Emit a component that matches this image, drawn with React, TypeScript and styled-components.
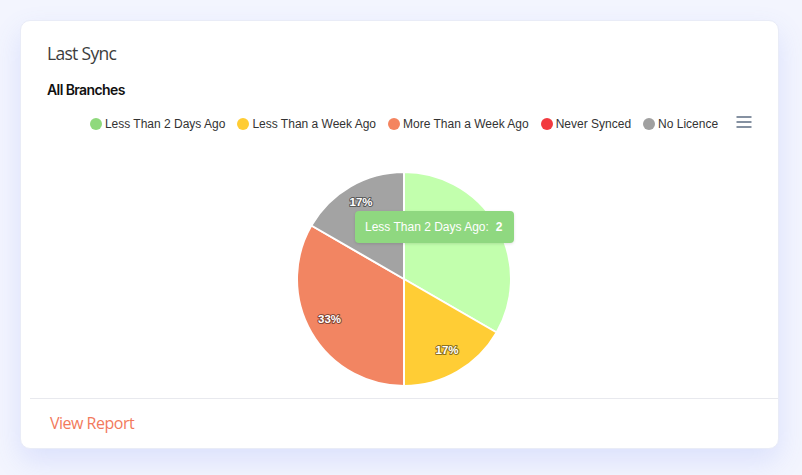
import React from "react";
import styled, { createGlobalStyle } from "styled-components";

const Global = createGlobalStyle`
  html, body { margin: 0; padding: 0; }
  body {
    background: #f3f5fe;
    width: 802px;
    height: 475px;
    overflow: hidden;
    font-family: "Liberation Sans", Arial, sans-serif;
  }
`;

const Page = styled.div`
  padding: 20px 23px 26px 20px;
`;

const Card = styled.div`
  width: 759px;
  height: 429px;
  box-sizing: border-box;
  background: #fff;
  border-radius: 10px;
  border: 1px solid #e9ecf7;
  box-shadow: 0 12px 28px rgba(95, 120, 245, 0.16);
  display: flex;
  flex-direction: column;
`;

const Title = styled.div`
  padding: 20px 26px 0;
  font-family: "Open Sans", sans-serif;
  font-size: 17.5px;
  line-height: 24px;
  letter-spacing: -0.7px;
  color: #3d3d3d;
`;

const ChartArea = styled.div`
  position: relative;
  margin-left: 9px;
  display: flex;
  flex-direction: column;
`;

const Subtitle = styled.div`
  margin-top: 15px;
  padding-left: 17px;
  font-family: Inter, sans-serif;
  font-weight: 600;
  font-size: 14px;
  line-height: 20px;
  letter-spacing: -0.6px;
  color: #111;
`;

const LegendRow = styled.div`
  margin-top: 14px;
  height: 20px;
  display: grid;
  grid-template-columns: 1fr auto 1fr;
  align-items: center;
`;

const Legend = styled.div`
  grid-column: 2;
  display: flex;
  align-items: center;
  gap: 12px;
`;

const LegendItem = styled.div`
  display: flex;
  align-items: center;
  gap: 3px;
  font-size: 12px;
  color: #333;
  white-space: nowrap;
`;

const Marker = styled.span<{ $color: string }>`
  width: 12px;
  height: 12px;
  border-radius: 50%;
  background: ${(p) => p.$color};
`;

const MenuButton = styled.div`
  grid-column: 3;
  justify-self: end;
  margin-right: 26px;
  margin-top: -4px;
  width: 16px;
  height: 12px;
  display: flex;
`;

const PieWrap = styled.div`
  position: relative;
  margin-top: 32px;
  height: 226px;
  display: flex;
  justify-content: center;
`;

const Tooltip = styled.div`
  position: absolute;
  left: 325px;
  top: 45px;
  width: 159px;
  height: 32px;
  box-sizing: border-box;
  padding: 0 10px;
  background: #8fd880;
  border-radius: 4px;
  box-shadow: 0 1px 3px rgba(0, 0, 0, 0.12);
  color: #fff;
  font-size: 12px;
  display: flex;
  align-items: center;
  white-space: nowrap;
`;

const TipValue = styled.b`
  margin-left: 7px;
`;

const Divider = styled.div`
  margin: 6px 0 0 9px;
  height: 1px;
  background: #e8e9ee;
`;

const Footer = styled.div`
  flex: 1;
  display: flex;
  align-items: center;
  padding-left: 29px;
  padding-bottom: 1px;
`;

const ReportLink = styled.a`
  font-family: "Open Sans", sans-serif;
  font-size: 16px;
  letter-spacing: -0.5px;
  color: #f27a5c;
  text-decoration: none;
  cursor: pointer;
`;

const legend = [
  { label: "Less Than 2 Days Ago", color: "#8fd97c" },
  { label: "Less Than a Week Ago", color: "#ffcc33" },
  { label: "More Than a Week Ago", color: "#f4845f" },
  { label: "Never Synced", color: "#f23a3f" },
  { label: "No Licence", color: "#a0a0a0" },
];

const slices = [
  { value: 2, color: "#c2ffad", label: "" },
  { value: 1, color: "#ffcd35", label: "17%" },
  { value: 2, color: "#f28562", label: "33%" },
  { value: 0, color: "#f23a3f", label: "" },
  { value: 1, color: "#a3a3a3", label: "17%" },
];

const CX = 120;
const CY = 113;
const R = 107;

function point(angleDeg: number, r: number) {
  const a = (angleDeg * Math.PI) / 180;
  return [CX + r * Math.sin(a), CY - r * Math.cos(a)];
}

function Pie() {
  const total = slices.reduce((s, x) => s + x.value, 0);
  let start = 0;
  const parts: React.ReactNode[] = [];
  const labels: React.ReactNode[] = [];
  slices.forEach((s, i) => {
    if (!s.value) return;
    const sweep = (s.value / total) * 360;
    const end = start + sweep;
    const [x1, y1] = point(start, R);
    const [x2, y2] = point(end, R);
    const large = sweep > 180 ? 1 : 0;
    parts.push(
      <path
        key={i}
        d={`M${CX} ${CY} L${x1} ${y1} A${R} ${R} 0 ${large} 1 ${x2} ${y2} Z`}
        fill={s.color}
        stroke="#fff"
        strokeWidth={2}
        strokeLinejoin="round"
      />
    );
    if (s.label) {
      const [lx, ly] = point(start + sweep / 2, 86);
      labels.push(
        <text
          key={"l" + i}
          x={lx}
          y={ly + 1}
          textAnchor="middle"
          fontFamily="Liberation Sans, Arial, sans-serif"
          fontSize="11.5"
          fontWeight="bold"
          fill="#fff"
          stroke="rgba(0,0,0,0.45)"
          strokeWidth={2.2}
          strokeLinejoin="round"
          style={{ paintOrder: "stroke" }}
        >
          {s.label}
        </text>
      );
    }
    start = end;
  });
  return (
    <svg width={240} height={226} viewBox="0 0 240 226">
      {parts}
      {labels}
    </svg>
  );
}

export default function App() {
  return (
    <>
      <Global />
      <Page>
        <Card>
          <Title>Last Sync</Title>
          <ChartArea>
            <Subtitle>All Branches</Subtitle>
            <LegendRow>
              <Legend>
                {legend.map((l) => (
                  <LegendItem key={l.label}>
                    <Marker $color={l.color} />
                    {l.label}
                  </LegendItem>
                ))}
              </Legend>
              <MenuButton>
                <svg width="16" height="12" viewBox="0 0 16 12">
                  <path d="M0.5 1h15M0.5 6h15M0.5 11h15" stroke="#5e6e82" strokeWidth="1.6" />
                </svg>
              </MenuButton>
            </LegendRow>
            <PieWrap>
              <Pie />
              <Tooltip>
                Less Than 2 Days Ago:<TipValue>2</TipValue>
              </Tooltip>
            </PieWrap>
          </ChartArea>
          <Divider />
          <Footer>
            <ReportLink>View Report</ReportLink>
          </Footer>
        </Card>
      </Page>
    </>
  );
}
